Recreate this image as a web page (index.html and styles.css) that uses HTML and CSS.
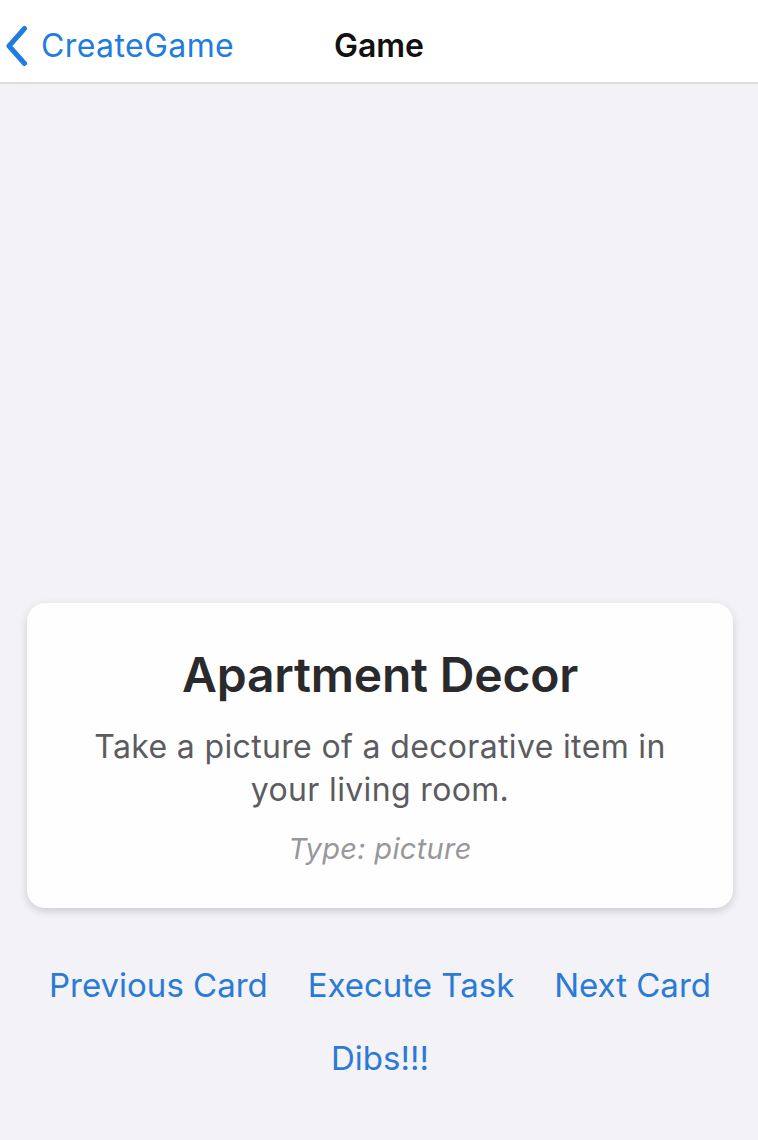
FILE: index.html
```html
<!DOCTYPE html>
<html>
<head>
<meta charset="utf-8">
<link rel="stylesheet" href="styles.css">
</head>
<body>
<div class="screen">
  <header class="navbar">
    <a class="back">
      <svg class="chev" width="26" height="42" viewBox="0 0 26 42"><path d="M21.5 3.5 L6 21 L21.5 38.5" fill="none" stroke="#1f7ce0" stroke-width="5" stroke-linecap="round" stroke-linejoin="round"/></svg>
      <span class="back-label">CreateGame</span>
    </a>
    <div class="title">Game</div>
    <div class="spacer"></div>
  </header>
  <main class="content">
    <section class="card">
      <h1 class="card-title">Apartment Decor</h1>
      <p class="card-desc">Take a picture of a decorative item in your living room.</p>
      <p class="card-type">Type: picture</p>
    </section>
    <div class="actions">
      <button class="btn">Previous Card</button>
      <button class="btn">Execute Task</button>
      <button class="btn">Next Card</button>
    </div>
    <div class="actions single">
      <button class="btn">Dibs!!!</button>
    </div>
  </main>
</div>
</body>
</html>
```

FILE: styles.css
```css
html, body {
  margin: 0;
  padding: 0;
}
body {
  font-family: Inter, "Liberation Sans", sans-serif;
  background: #f2f2f7;
  width: 758px;
  height: 1140px;
  overflow: hidden;
}
.screen {
  display: flex;
  flex-direction: column;
  height: 1140px;
}
.navbar {
  height: 84px;
  background: #ffffff;
  border-bottom: 2px solid #dcdcdf;
  display: grid;
  grid-template-columns: 1fr auto 1fr;
  align-items: start;
  box-sizing: border-box;
  padding-top: 26px;
}
.back {
  display: flex;
  align-items: flex-start;
  padding-left: 3px;
  gap: 12px;
  color: #1f7ce0;
}
.chev {
  display: block;
  margin-top: -1px;
}
.back-label {
  font-size: 32px;
  line-height: 40px;
  letter-spacing: 0.4px;
}
.title {
  font-size: 32px;
  line-height: 40px;
  font-weight: 600;
  color: #111;
}
.content {
  flex: 1;
  display: flex;
  flex-direction: column;
  justify-content: flex-end;
  padding: 0 25px 60px 27px;
}
.card {
  background: #fefefe;
  border-radius: 18px;
  box-shadow: 0 3px 8px rgba(0,0,0,0.16);
  padding: 43px 50px 0;
  text-align: center;
  height: 305px;
  box-sizing: border-box;
}
.card-title {
  margin: 0;
  font-size: 48px;
  font-weight: 600;
  color: #2a2a2c;
  line-height: 58px;
  letter-spacing: -0.2px;
}
.card-desc {
  margin: 21px 0 0;
  font-size: 32px;
  line-height: 43px;
  color: #5c5c60;
  letter-spacing: 0.35px;
}
.card-type {
  margin: 20px 0 0;
  font-size: 29px;
  font-style: italic;
  color: #98989c;
  line-height: 36px;
  letter-spacing: 0.3px;
}
.actions {
  display: flex;
  justify-content: space-between;
  margin-top: 55px;
  padding: 0 22px;
}
.actions.single {
  justify-content: center;
  margin-top: 29px;
}
.btn {
  background: none;
  border: none;
  padding: 0;
  font-family: inherit;
  font-size: 33px;
  color: #2a7ad6;
  line-height: 44px;
}
```
